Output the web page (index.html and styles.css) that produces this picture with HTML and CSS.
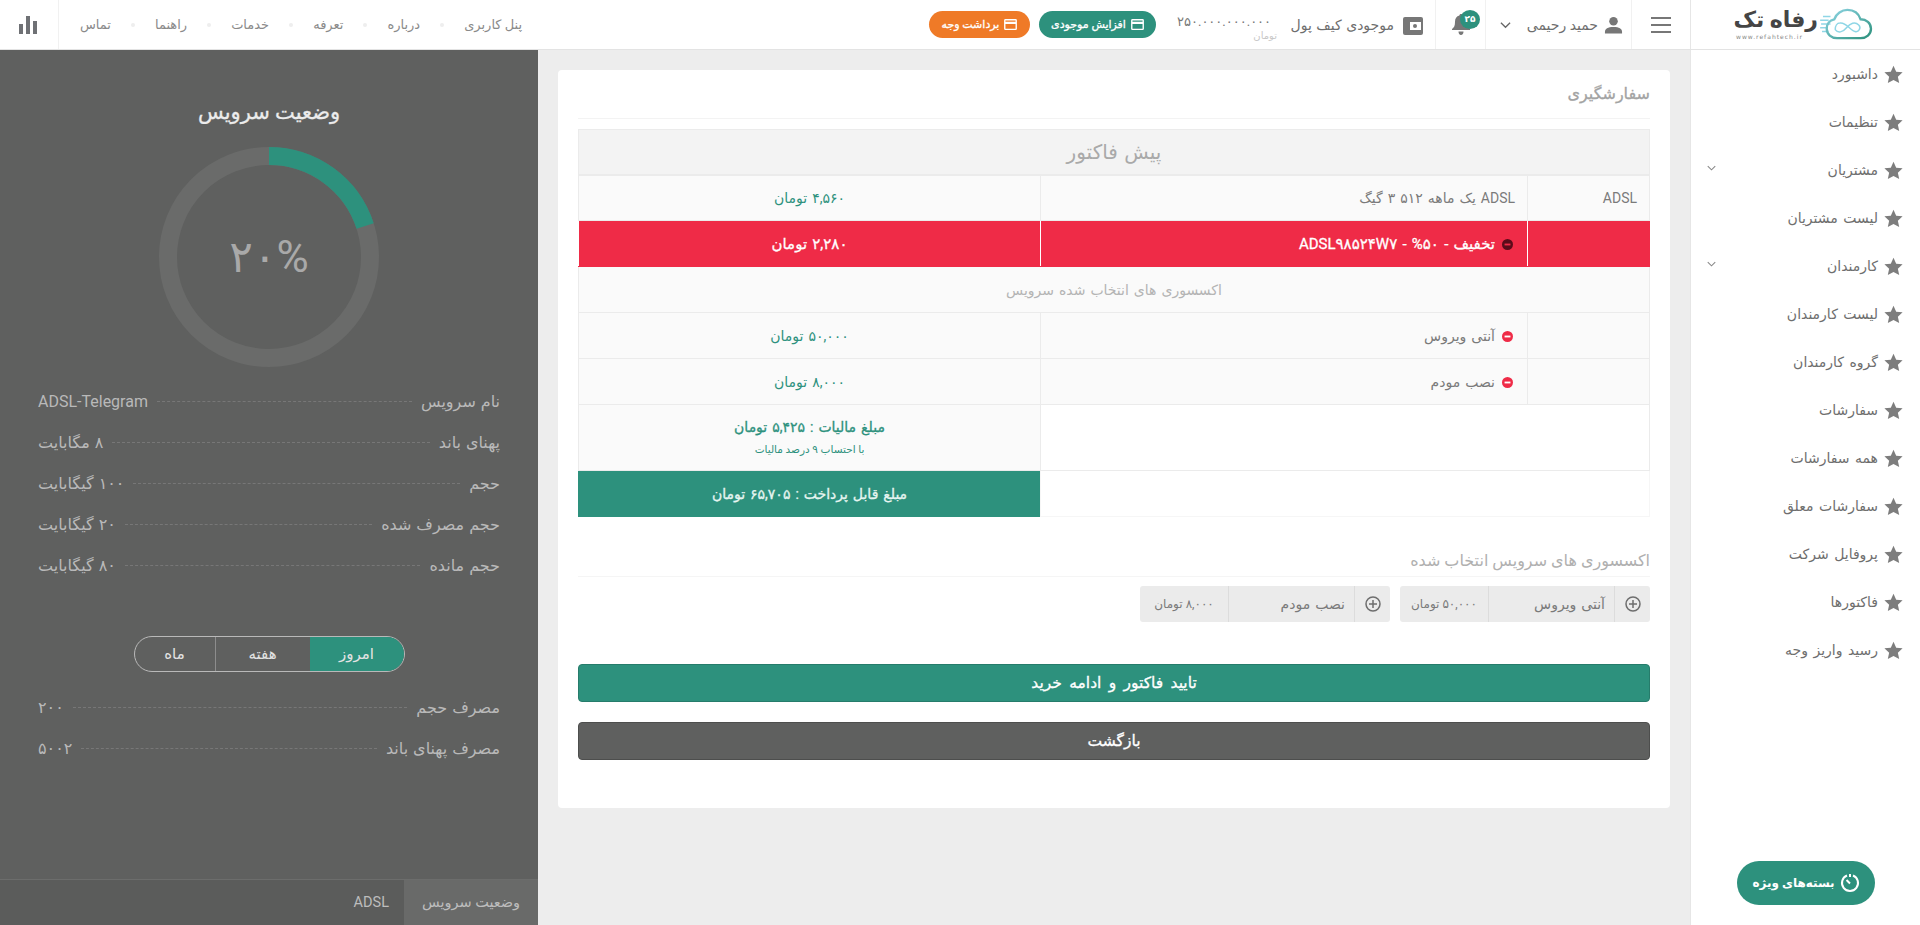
FILE: index.html
```html
<!DOCTYPE html>
<html lang="fa" dir="rtl">
<head>
    <meta charset="UTF-8">
    <meta name="viewport" content="width=device-width, initial-scale=1.0">
    <title>رفاه تک - سفارشگیری</title>
    <link rel="stylesheet" href="styles.css">
</head>
<body>
    <svg class="sprite" aria-hidden="true">
        <symbol id="i-star" viewBox="0 0 24 24"><path d="M12 1l3.4 7.4 8.1.9-6 5.5 1.7 8L12 18.8l-7.2 4 1.7-8-6-5.500 8.100-.9z"/></symbol>
        <symbol id="i-chev" viewBox="0 0 12 8"><path d="M1 1.5l5 5 5-5" fill="none" stroke="currentColor" stroke-width="1.4"/></symbol>
        <symbol id="i-card" viewBox="0 0 14 12"><path d="M1.5 0h11A1.5 1.5 0 0 1 14 1.5v9a1.5 1.5 0 0 1-1.5 1.5h-11A1.5 1.5 0 0 1 0 10.5v-9A1.5 1.5 0 0 1 1.5 0zm0 1.500v1.500h11V1.500zm0 4v5h11v-5z"/></symbol>
        <symbol id="i-minus" viewBox="0 0 12 12"><circle cx="6" cy="6" r="6"/><rect x="2.8" y="5" width="6.4" height="2" fill="var(--dash, #fff)"/></symbol>
        <symbol id="i-plus" viewBox="0 0 16 16"><circle cx="8" cy="8" r="7" fill="none" stroke="currentColor" stroke-width="1.5"/><path d="M8 4v8M4 8h8" stroke="currentColor" stroke-width="1.5"/></symbol>
    </svg>

    <header class="topbar">
        <div class="logo">
            <div class="logo-text">
                <span class="logo-name">رفاه تک</span>
                <span class="logo-url">www.refahtech.ir</span>
            </div>
            <svg class="logo-cloud" viewBox="6 0 56 34" fill="none">
                <defs>
                    <linearGradient id="cloudGrad" x1="0" y1="0" x2="1" y2="1">
                        <stop offset="0" stop-color="#8fd6e6"/>
                        <stop offset="1" stop-color="#2d917d"/>
                    </linearGradient>
                </defs>
                <path d="M6 13h9M7 17h10M6 21h8M8 25h7M9 9h8" stroke="#8fd6e6" stroke-width="1.5"/>
                <path d="M24 32c-6 0-11-4-11-10 0-5 3-9 8-10 2-6 8-10 14-10 7 0 12 4 14 10 6 0 11 4 11 10s-5 10-11 10z" stroke="url(#cloudGrad)" stroke-width="2.5"/>
                <path d="M22 23c3 4 8 3 12-2s9-7 13-3c3 3 0 8-4 7-5-1-9-10-16-9-3 0-5 3-5 7" stroke="#8fd6e6" stroke-width="1.6"/>
            </svg>
        </div>
        <button class="menu-btn" aria-label="منو"><span></span><span></span><span></span></button>
        <div class="user">
            <svg class="user-icon" viewBox="0 0 20 18"><circle cx="10" cy="5" r="4.5"/><path d="M1 18v-2c0-3 3-5 9-5s9 2 9 5v2z"/></svg>
            <span class="user-name">حمید رحیمی</span>
            <svg class="chev"><use href="#i-chev"/></svg>
        </div>
        <div class="notify">
            <svg class="bell" viewBox="0 0 18 21"><path d="M9 0c1 0 1.600.7 1.600 1.600C13.500 2.300 15 4.700 15 8c0 4 1 5.500 3 7v1H0v-1c2-1.500 3-3 3-7 0-3.300 1.500-5.700 4.400-6.400C7.400.7 8 0 9 0zM6.500 17.500h5C11.500 19.500 10.500 21 9 21s-2.500-1.500-2.500-3.500z"/></svg>
            <span class="badge">۲۵</span>
        </div>
        <div class="wallet">
            <svg class="wallet-icon" viewBox="0 0 20 18"><path d="M2 0h16a2 2 0 0 1 2 2v14a2 2 0 0 1-2 2H2z"/><path d="M0 2a2 2 0 0 1 2-2v18a2 2 0 0 1-2-2z"/><path d="M7 5h11v8H7z" fill="#fff"/><circle cx="12" cy="9" r="2"/></svg>
            <span class="wallet-label">موجودی کیف پول</span>
            <div class="wallet-amount">
                <span class="amount">۲۵۰.۰۰۰.۰۰۰.۰۰۰</span>
                <span class="amount-unit">تومان</span>
            </div>
            <a class="pill pill-green"><svg class="pill-icon"><use href="#i-card"/></svg>افزایش موجودی</a>
            <a class="pill pill-orange"><svg class="pill-icon"><use href="#i-card"/></svg>برداشت وجه</a>
        </div>
        <nav class="topnav">
            <a>پنل کاربری</a><i></i>
            <a>درباره</a><i></i>
            <a>تعرفه</a><i></i>
            <a>خدمات</a><i></i>
            <a>راهنما</a><i></i>
            <a>تماس</a>
        </nav>
        <div class="chart-cell">
            <svg viewBox="0 0 18 18"><rect x="0" y="8" width="4" height="10"/><rect x="7" y="0" width="4" height="18"/><rect x="14" y="5" width="4" height="13"/></svg>
        </div>
    </header>

    <div class="layout">
        <aside class="sidebar">
            <a class="side-item"><svg class="star"><use href="#i-star"/></svg>داشبورد</a>
            <a class="side-item"><svg class="star"><use href="#i-star"/></svg>تنظیمات</a>
            <a class="side-item"><svg class="star"><use href="#i-star"/></svg>مشتریان<svg class="side-chev"><use href="#i-chev"/></svg></a>
            <a class="side-item"><svg class="star"><use href="#i-star"/></svg>لیست مشتریان</a>
            <a class="side-item"><svg class="star"><use href="#i-star"/></svg>کارمندان<svg class="side-chev"><use href="#i-chev"/></svg></a>
            <a class="side-item"><svg class="star"><use href="#i-star"/></svg>لیست کارمندان</a>
            <a class="side-item"><svg class="star"><use href="#i-star"/></svg>گروه کارمندان</a>
            <a class="side-item"><svg class="star"><use href="#i-star"/></svg>سفارشات</a>
            <a class="side-item"><svg class="star"><use href="#i-star"/></svg>همه سفارشات</a>
            <a class="side-item"><svg class="star"><use href="#i-star"/></svg>سفارشات معلق</a>
            <a class="side-item"><svg class="star"><use href="#i-star"/></svg>پروفایل شرکت</a>
            <a class="side-item"><svg class="star"><use href="#i-star"/></svg>فاکتورها</a>
            <a class="side-item"><svg class="star"><use href="#i-star"/></svg>رسید واریز وجه</a>
            <a class="special">
                <svg viewBox="0 0 20 20" fill="none" stroke="#fff" stroke-width="2"><path d="M7 2.500a8 8 0 1 0 6 0"/><path d="M10 1v3M6.500 7l3.500 3.500M14 9h.01M10 15h.01"/></svg>
                بسته‌های ویژه
            </a>
        </aside>

        <main class="main">
            <section class="card">
                <h2 class="card-title">سفارشگیری</h2>
                <table class="invoice">
                    <colgroup><col class="col-a"><col class="col-b"><col class="col-c"></colgroup>
                    <tr class="row-head"><th colspan="3">پیش فاکتور</th></tr>
                    <tr>
                        <td class="cell-start">ADSL</td>
                        <td class="cell-start">ADSL یک ماهه ۵۱۲ ۳ گیگ</td>
                        <td class="price">۴,۵۶۰ تومان</td>
                    </tr>
                    <tr class="row-red">
                        <td></td>
                        <td class="cell-start"><svg class="dash dash-dark"><use href="#i-minus"/></svg>تخفیف - ۵۰% - ADSL۹۸۵۲۴W۷</td>
                        <td class="price">۲,۲۸۰ تومان</td>
                    </tr>
                    <tr><td colspan="3" class="sub-head">اکسسوری های انتخاب شده سرویس</td></tr>
                    <tr>
                        <td></td>
                        <td class="cell-start"><svg class="dash"><use href="#i-minus"/></svg>آنتی ویروس</td>
                        <td class="price">۵۰,۰۰۰ تومان</td>
                    </tr>
                    <tr>
                        <td></td>
                        <td class="cell-start"><svg class="dash"><use href="#i-minus"/></svg>نصب مودم</td>
                        <td class="price">۸,۰۰۰ تومان</td>
                    </tr>
                    <tr class="row-tax">
                        <td class="blank" colspan="2"></td>
                        <td class="price">
                            <strong>مبلغ مالیات : ۵,۴۲۵ تومان</strong>
                            <small>با احتساب ۹ درصد مالیات</small>
                        </td>
                    </tr>
                    <tr class="row-total">
                        <td class="blank faint" colspan="2"></td>
                        <td class="total">مبلغ قابل پرداخت : ۶۵,۷۰۵ تومان</td>
                    </tr>
                </table>

                <h3 class="acc-title">اکسسوری های سرویس انتخاب شده</h3>
                <div class="chips">
                    <div class="chip">
                        <span class="chip-icon"><svg><use href="#i-plus"/></svg></span>
                        <span class="chip-name">آنتی ویروس</span>
                        <span class="chip-price">۵۰,۰۰۰ تومان</span>
                    </div>
                    <div class="chip">
                        <span class="chip-icon"><svg><use href="#i-plus"/></svg></span>
                        <span class="chip-name">نصب مودم</span>
                        <span class="chip-price">۸,۰۰۰ تومان</span>
                    </div>
                </div>

                <button class="btn btn-green">تایید فاکتور و ادامه خرید</button>
                <button class="btn btn-dark">بازگشت</button>
            </section>
        </main>

        <aside class="panel">
            <h2 class="panel-title">وضعیت سرویس</h2>
            <div class="donut">
                <svg viewBox="0 0 220 220" fill="none" stroke-width="18">
                    <circle cx="110" cy="110" r="101" stroke="#6a6b6a"/>
                    <circle cx="110" cy="110" r="101" stroke="#2d917d" stroke-dasharray="126.9 507.7" transform="rotate(-90 110 110)"/>
                </svg>
                <span class="donut-value">۲۰%</span>
            </div>
            <ul class="stats">
                <li><span>نام سرویس</span><i></i><span class="latin">ADSL-Telegram</span></li>
                <li><span>پهنای باند</span><i></i><span>۸ مگابایت</span></li>
                <li><span>حجم</span><i></i><span>۱۰۰ گیگابایت</span></li>
                <li><span>حجم مصرف شده</span><i></i><span>۲۰ گیگابایت</span></li>
                <li><span>حجم مانده</span><i></i><span>۸۰ گیگابایت</span></li>
            </ul>
            <div class="toggle">
                <a class="active">امروز</a>
                <a>هفته</a>
                <a>ماه</a>
            </div>
            <ul class="stats stats-usage">
                <li><span>مصرف حجم</span><i></i><span>۲۰۰</span></li>
                <li><span>مصرف پهنای باند</span><i></i><span>۵۰۰۲</span></li>
            </ul>
            <div class="tabs">
                <a class="active">وضعیت سرویس</a>
                <a>ADSL</a>
            </div>
        </aside>
    </div>
</body>
</html>
```

FILE: styles.css
```css
:root {
    --green: #2d917d;
    --orange: #ef7a27;
    --red: #ef2b47;
    --panel: #5f605f;
    --line: #ebebeb;
    --text: #777;
}

* {
    margin: 0;
    padding: 0;
    box-sizing: border-box;
}

html, body {
    height: 100%;
    overflow: hidden;
}

body {
    font-family: Roboto, "DejaVu Sans", sans-serif;
    font-size: 14px;
    color: var(--text);
    background: #ededed;
    display: flex;
    flex-direction: column;
}

a {
    color: inherit;
    text-decoration: none;
}

ul {
    list-style: none;
}

.sprite {
    display: none;
}

/* the webfont of the page has a medium weight, DejaVu only jumps to heavy bold */
.card-title,
.row-red td,
.row-tax strong,
.invoice .total,
.btn,
.panel-title,
.pill {
    font-weight: 400;
    -webkit-text-stroke: .3px;
}

/* top bar */
.topbar {
    height: 50px;
    flex: none;
    display: flex;
    align-items: stretch;
    background: #fff;
    border-bottom: 1px solid #e3e3e3;
}

.logo {
    width: 230px;
    flex: none;
    border-left: 1px solid #e6e6e6;
    display: flex;
    flex-direction: row-reverse;
    align-items: center;
    justify-content: flex-end;
    padding-right: 47px;
    gap: 2px;
}

.logo-cloud {
    width: 53px;
    height: 32px;
    flex: none;
    margin-top: -2px;
}

.logo-text {
    display: flex;
    flex-direction: column;
    align-items: flex-start;
    width: 82px;
    margin-top: -3px;
}

.logo-name {
    font-size: 22px;
    line-height: 26px;
    font-weight: 700;
    color: #454545;
    white-space: nowrap;
    letter-spacing: -1px;
}

.logo-url {
    font-family: "DejaVu Sans", sans-serif;
    font-size: 6px;
    line-height: 7px;
    letter-spacing: 1px;
    color: #888;
    direction: ltr;
    align-self: flex-end;
}

.menu-btn {
    width: 59px;
    flex: none;
    border: none;
    background: none;
    border-left: 1px solid #f1f1f1;
    display: flex;
    flex-direction: column;
    align-items: center;
    justify-content: center;
    gap: 5px;
}

.menu-btn span {
    width: 20px;
    height: 2px;
    background: #777;
}

.user {
    width: 146px;
    flex: none;
    display: flex;
    align-items: center;
    padding-right: 8px;
    gap: 6px;
    border-left: 1px solid #f1f1f1;
    font-size: 14px;
}

.user-icon {
    width: 19px;
    height: 18px;
    fill: #777;
    flex: none;
}

.user-name {
    white-space: nowrap;
    color: #6e6e6e;
}

.chev {
    width: 11px;
    height: 8px;
    margin-right: auto;
    margin-left: 14px;
    color: #666;
}

.notify {
    width: 50px;
    flex: none;
    position: relative;
    border-left: 1px solid #f1f1f1;
}

.bell {
    position: absolute;
    top: 14px;
    right: 15px;
    width: 18px;
    height: 21px;
    fill: #777;
}

.badge {
    position: absolute;
    top: 10px;
    right: 5px;
    width: 20px;
    height: 19px;
    border-radius: 50%;
    background: var(--green);
    color: #fff;
    font-size: 9px;
    font-weight: 700;
    text-align: center;
    line-height: 19px;
}

.wallet {
    display: flex;
    align-items: center;
    padding-right: 12px;
}

.wallet-icon {
    width: 20px;
    height: 18px;
    fill: #777;
    flex: none;
    margin-top: 2px;
}

.wallet-label {
    width: 107px;
    flex: none;
    font-size: 14px;
    word-spacing: 1px;
    color: #6e6e6e;
    margin-right: 9px;
    white-space: nowrap;
}

.wallet-amount {
    display: flex;
    flex-direction: column;
    margin-right: 10px;
    width: 100px;
    flex: none;
}

.amount {
    font-size: 13px;
    letter-spacing: .5px;
    color: #777;
    line-height: 14px;
    margin-top: 9px;
    white-space: nowrap;
    align-self: flex-end;
}

.amount-unit {
    font-size: 10px;
    line-height: 14px;
    color: #c8c8c8;
}

.pill {
    height: 27px;
    flex: none;
    border-radius: 14px;
    color: #fff;
    font-size: 11px;
    display: flex;
    align-items: center;
    justify-content: center;
    gap: 5px;
    white-space: nowrap;
}

.pill-green {
    width: 117px;
    background: var(--green);
    margin-right: 21px;
}

.pill-orange {
    width: 101px;
    background: var(--orange);
    margin-right: 9px;
}

.pill-icon {
    width: 13px;
    height: 11px;
    fill: #fff;
}

.topnav {
    margin-right: auto;
    display: flex;
    align-items: center;
    gap: 20px;
    padding-left: 21px;
    font-size: 13px;
    color: #8a8a8a;
    white-space: nowrap;
}

.topnav i {
    width: 4px;
    height: 4px;
    border-radius: 50%;
    background: #eee;
}

.chart-cell {
    width: 59px;
    flex: none;
    border-right: 1px solid #f1f1f1;
    display: flex;
    align-items: center;
    justify-content: center;
}

.chart-cell svg {
    width: 18px;
    height: 18px;
    fill: #6f7175;
    margin-left: -2px;
}

/* page columns */
.layout {
    flex: 1;
    min-height: 0;
    display: flex;
}

.sidebar {
    width: 230px;
    flex: none;
    background: #fff;
    border-left: 1px solid #e6e6e6;
    position: relative;
}

.side-item {
    height: 48px;
    display: flex;
    align-items: center;
    padding-right: 17px;
    gap: 6px;
    font-size: 14px;
    word-spacing: 2px;
    color: #6e6e6e;
    white-space: nowrap;
}

.star {
    width: 19px;
    height: 19px;
    fill: #7d7d7d;
    flex: none;
}

.side-chev {
    width: 9px;
    height: 6px;
    margin-right: auto;
    margin-left: 16px;
    margin-top: -4px;
    color: #888;
}

.special {
    position: absolute;
    left: 46px;
    bottom: 20px;
    width: 138px;
    height: 44px;
    border-radius: 22px;
    background: var(--green);
    color: #fff;
    font-size: 12px;
    font-weight: 700;
    display: flex;
    align-items: center;
    justify-content: center;
    gap: 5px;
    white-space: nowrap;
}

.special svg {
    width: 20px;
    height: 20px;
}

.main {
    flex: 1;
    min-width: 0;
    padding: 20px;
}

.card {
    background: #fff;
    border-radius: 4px;
    padding: 0 20px 47px;
    height: 738px;
}

.card-title {
    height: 49px;
    line-height: 48px;
    font-size: 16px;
    color: #a3a3a3;
    border-bottom: 1px solid #f3f3f3;
    margin-bottom: 10px;
}

.invoice {
    width: 100%;
    table-layout: fixed;
    border-collapse: collapse;
    font-size: 14px;
    word-spacing: 1.5px;
}

.col-a {
    width: 122px;
}

.col-b {
    width: 487px;
}

.invoice th,
.invoice td {
    border: 1px solid var(--line);
    text-align: center;
    height: 46px;
    background: #fafafa;
}

.invoice th {
    height: 45px;
    background: #f3f3f3;
    font-size: 20px;
    font-weight: 400;
    color: #a9a9a9;
    border-bottom-width: 2px;
}

.invoice .cell-start {
    text-align: right;
    padding-right: 12px;
    color: #7a7a7a;
}

.price {
    color: var(--green);
}

.row-red td,
.invoice .row-red .cell-start {
    background: var(--red);
    color: #fff;
    font-size: 15px;
    border-color: var(--red);
    border-left-color: #fff;
    border-right-color: var(--red);
}

.dash {
    width: 11px;
    height: 11px;
    fill: var(--red);
    vertical-align: -1px;
    margin-left: 7px;
    margin-right: 2px;
}

.dash-dark {
    fill: #5b0b1a;
    --dash: var(--red);
}

.sub-head {
    color: #b4b4b4;
}

.row-tax td {
    height: 66px;
}

.invoice .blank {
    background: #fff;
}

.invoice .faint {
    border-color: #f6f6f6;
}

.row-tax strong {
    display: block;
    font-size: 14px;
}

.row-tax small {
    display: block;
    font-size: 10.5px;
    word-spacing: 0;
    margin-top: 8px;
}

.invoice .total {
    background: var(--green);
    border-color: var(--green);
    color: #e6f5f1;
    height: 45px;
}

.acc-title {
    height: 60px;
    line-height: 88px;
    font-size: 16px;
    font-weight: 400;
    color: #b0b0b0;
    border-bottom: 1px solid #f5f5f5;
}

.chips {
    display: flex;
    gap: 10px;
    margin-top: 9px;
}

.chip {
    width: 250px;
    height: 36px;
    display: flex;
    background: #ebebeb;
    border-radius: 3px;
    font-size: 14px;
    word-spacing: 1.5px;
    color: #7a7a7a;
}

.chip > span {
    display: flex;
    align-items: center;
}

.chip-icon {
    width: 36px;
    flex: none;
    justify-content: center;
    border-left: 1px solid #dcdcdc;
}

.chip-icon svg {
    width: 16px;
    height: 16px;
    color: #6e6e6e;
}

.chip-name {
    width: 126px;
    flex: none;
    padding-right: 9px;
    border-left: 1px solid #dcdcdc;
}

.chip-price {
    flex: 1;
    justify-content: center;
    font-size: 12px;
    word-spacing: 0;
}

.btn {
    display: block;
    width: 100%;
    height: 38px;
    border-radius: 4px;
    font-family: inherit;
    font-size: 15.5px;
    word-spacing: 3.5px;
    color: #fff;
    border: 1px solid transparent;
}

.btn-green {
    background: var(--green);
    border-color: #267c6b;
    margin-top: 42px;
}

.btn-dark {
    background: var(--panel);
    border-color: #4d4e4d;
    margin-top: 20px;
}

/* service status panel */
.panel {
    width: 538px;
    flex: none;
    background: var(--panel);
    display: flex;
    flex-direction: column;
    color: #b9b9b9;
}

.panel-title {
    margin-top: 49px;
    line-height: 26px;
    font-size: 21px;
    color: #ececec;
    text-align: center;
}

.donut {
    width: 220px;
    height: 220px;
    margin: 22px auto 0;
    position: relative;
}

.donut svg {
    display: block;
}

.donut-value {
    position: absolute;
    inset: 0;
    display: flex;
    align-items: center;
    justify-content: center;
    font-size: 44px;
    color: #a9a9a9;
}

.stats {
    margin: 14px 38px 0;
    font-size: 16px;
    word-spacing: 1px;
}

.stats li {
    height: 41px;
    display: flex;
    align-items: center;
    white-space: nowrap;
}

.stats i {
    flex: 1;
    border-top: 1px dashed #777;
    margin: 0 9px;
}

.stats-usage {
    margin-top: 15px;
}

.toggle {
    width: 271px;
    height: 36px;
    margin: 50px auto 0;
    display: flex;
    border: 1px solid #b9b9b9;
    border-radius: 18px;
    overflow: hidden;
    font-size: 15px;
    color: #e3e3e3;
}

.toggle a {
    display: flex;
    align-items: center;
    justify-content: center;
    width: 95px;
    border-left: 1px solid #8d8d8d;
}

.toggle a:last-child {
    flex: 1;
    border-left: none;
}

.toggle .active {
    background: var(--green);
    width: 94px;
    border-left: none;
}

.tabs {
    margin-top: auto;
    height: 46px;
    flex: none;
    display: flex;
    background: #5b5c5b;
    border-top: 1px solid #6c6d6c;
    font-size: 14.5px;
    color: #bdbdbd;
}

.tabs a {
    display: flex;
    align-items: center;
    padding: 0 15px;
}

.tabs .active {
    width: 134px;
    background: #696a69;
    padding: 0;
    justify-content: center;
}
```
